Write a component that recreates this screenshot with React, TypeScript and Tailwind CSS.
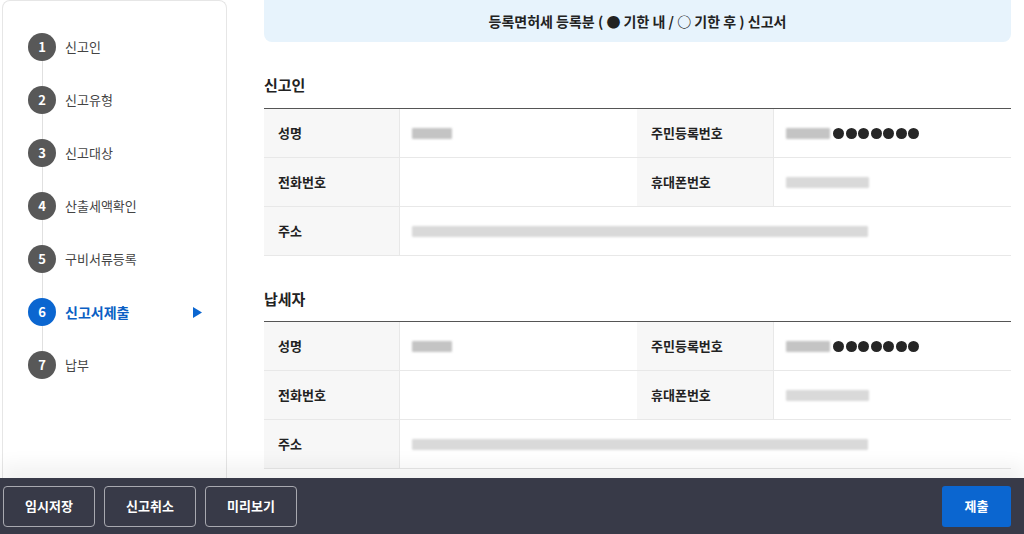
import React from "react";

const steps = [
  { no: 1, label: "신고인" },
  { no: 2, label: "신고유형" },
  { no: 3, label: "신고대상" },
  { no: 4, label: "산출세액확인" },
  { no: 5, label: "구비서류등록" },
  { no: 6, label: "신고서제출", active: true },
  { no: 7, label: "납부" },
];

function Blur({ w, dark }: { w: number; dark?: boolean }) {
  return (
    <div
      className={`h-[11px] rounded-[1px] blur-[1px] ${dark ? "bg-[#c4c4c4]" : "bg-[#d9d9d9]"}`}
      style={{ width: w }}
    />
  );
}

function Dots() {
  return (
    <div className="flex items-center gap-[1.5px]">
      {Array.from({ length: 7 }).map((_, i) => (
        <span key={i} className="w-[11px] h-[11px] rounded-full bg-[#262626]" />
      ))}
    </div>
  );
}

function InfoTable() {
  const label = "bg-[#f7f7f7] px-[14px] flex items-center text-[13px] font-bold text-[#222]";
  const value = "px-[12px] flex items-center";
  return (
    <div className="border-t border-[#555]">
      <div className="grid grid-cols-[136px_237px_137px_1fr] h-[49px] border-b border-[#e8e8e8]">
        <div className={`${label} border-r border-[#e8e8e8]`}>성명</div>
        <div className={value}>
          <Blur w={40} dark />
        </div>
        <div className={`${label} border-r border-[#e8e8e8]`}>주민등록번호</div>
        <div className={`${value} gap-[3px]`}>
          <Blur w={44} dark />
          <Dots />
        </div>
      </div>
      <div className="grid grid-cols-[136px_237px_137px_1fr] h-[49px] border-b border-[#e8e8e8]">
        <div className={`${label} border-r border-[#e8e8e8]`}>전화번호</div>
        <div className={value} />
        <div className={`${label} border-r border-[#e8e8e8]`}>휴대폰번호</div>
        <div className={value}>
          <Blur w={83} />
        </div>
      </div>
      <div className="grid grid-cols-[136px_1fr] h-[49px] border-b border-[#e8e8e8]">
        <div className={`${label} border-r border-[#e8e8e8]`}>주소</div>
        <div className={value}>
          <Blur w={456} />
        </div>
      </div>
    </div>
  );
}

export default function App() {
  return (
    <div
      className="w-[1024px] h-[534px] bg-white flex flex-col overflow-hidden"
      style={{ fontFamily: '"Noto Sans CJK KR", "Noto Sans", sans-serif' }}
    >
      <div className="flex flex-1 min-h-0">
        {/* Sidebar */}
        <aside className="ml-[2px] w-[225px] border border-b-0 border-[#e6e6e6] rounded-t-lg pt-[32px] pl-[25px] pr-[24px]">
          <ul className="flex flex-col">
            {steps.map((s, i) => (
              <li key={s.no} className="flex flex-col">
                <div className="flex items-center">
                  <span
                    className={`w-[28px] h-[28px] rounded-full flex items-center justify-center text-white text-[13px] font-bold ${
                      s.active ? "bg-[#0b66d0]" : "bg-[#585858]"
                    }`}
                  >
                    {s.no}
                  </span>
                  <span
                    className={`ml-[9px] flex-1 ${
                      s.active ? "text-[14px] font-bold text-[#0b5fc4]" : "text-[13px] text-[#444]"
                    }`}
                  >
                    {s.label}
                  </span>
                  {s.active && (
                    <svg width="9" height="11" viewBox="0 0 9 11">
                      <path d="M0 0L9 5.5L0 11Z" fill="#0b66d0" />
                    </svg>
                  )}
                </div>
                {i < steps.length - 1 && <div className="ml-[13.5px] w-px h-[25px] bg-[#e0e0e0]" />}
              </li>
            ))}
          </ul>
        </aside>

        {/* Main */}
        <main className="flex-1 pl-[37px] pr-[13px]">
          <div className="h-[42px] bg-[#e7f3fc] rounded-b-lg flex items-center justify-center text-[14px] font-bold text-[#222]">
            등록면허세 등록분 ( ● 기한 내 / ○ 기한 후 ) 신고서
          </div>

          <h2 className="mt-[33px] mb-[13px] h-[20px] leading-[20px] text-[15px] font-bold text-[#222]">신고인</h2>
          <InfoTable />

          <h2 className="mt-[33px] mb-[12px] h-[20px] leading-[20px] text-[15px] font-bold text-[#222]">납세자</h2>
          <InfoTable />
        </main>
      </div>

      {/* Bottom bar */}
      <footer className="h-[56px] shrink-0 bg-[#383a48] flex items-center justify-between pl-[3px] pr-[13px] shadow-[0_-14px_18px_rgba(0,0,0,0.05)] relative">
        <div className="flex gap-[9px]">
          {["임시저장", "신고취소", "미리보기"].map((t) => (
            <button
              key={t}
              className="w-[92px] h-[41px] rounded-[4px] border border-[#a8a9b0] text-white text-[13px] font-bold"
            >
              {t}
            </button>
          ))}
        </div>
        <button className="w-[69px] h-[41px] rounded-[3px] bg-[#0b66d0] text-white text-[13px] font-bold">제출</button>
      </footer>
    </div>
  );
}
